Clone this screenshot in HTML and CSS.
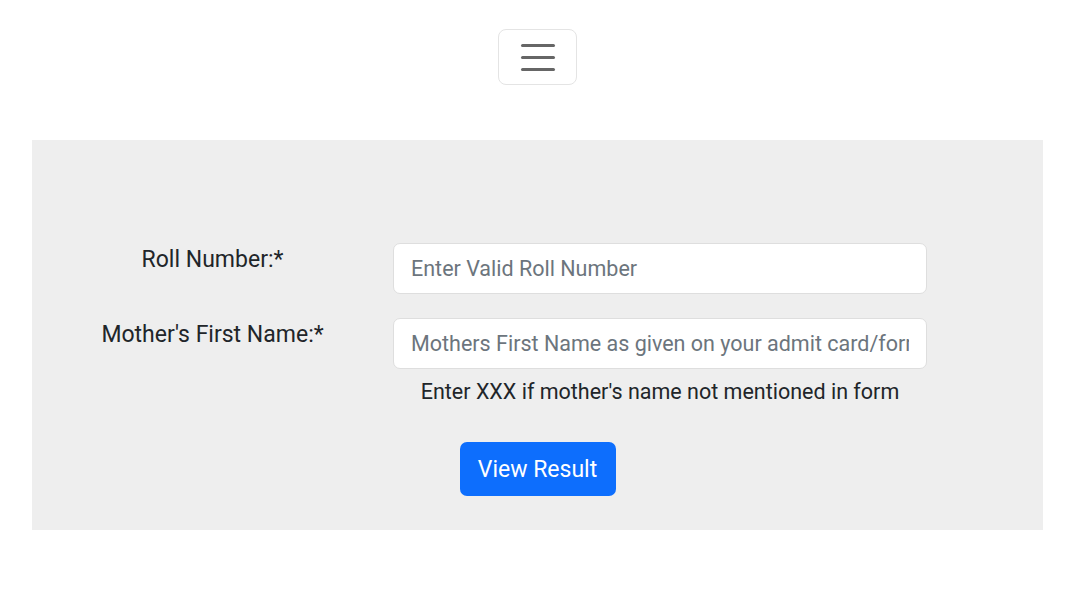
FILE: index.html
```html
<!DOCTYPE html>
<html lang="en">
<head>
<meta charset="utf-8">
<title>Result</title>
<link rel="stylesheet" href="styles.css">
</head>
<body>
<div class="page">
  <header class="topbar">
    <button class="toggler" type="button" aria-label="Toggle navigation">
      <span class="bar"></span><span class="bar"></span><span class="bar"></span>
    </button>
  </header>
  <main class="panel">
    <form class="form">
      <div class="row">
        <label class="label" for="roll">Roll Number:*</label>
        <div class="field">
          <input class="input" id="roll" type="text" placeholder="Enter Valid Roll Number">
        </div>
      </div>
      <div class="row">
        <label class="label" for="mname">Mother's First Name:*</label>
        <div class="field">
          <input class="input" id="mname" type="text" placeholder="Mothers First Name as given on your admit card/form">
          <p class="help">Enter XXX if mother's name not mentioned in form</p>
        </div>
      </div>
      <div class="actions">
        <button class="btn" type="button">View Result</button>
      </div>
    </form>
  </main>
</div>
</body>
</html>
```
FILE: styles.css
```css
* { box-sizing: border-box; }
html, body { margin: 0; padding: 0; background: #fff; }
body {
  font-family: Roboto, "Liberation Sans", Arial, sans-serif;
  color: #212529;
  font-size: 23px;
  line-height: 1.5;
}
.page { width: 1011px; margin-left: 32px; }
.topbar {
  display: flex;
  justify-content: center;
  padding-top: 29px;
  padding-bottom: 55px;
}
.toggler {
  width: 79px;
  height: 56px;
  border: 1px solid #e4e4e4;
  border-radius: 8px;
  background: #fff;
  display: flex;
  flex-direction: column;
  align-items: center;
  justify-content: center;
  gap: 9px;
  padding: 0;
}
.bar {
  display: block;
  width: 34px;
  height: 3px;
  border-radius: 2px;
  background: #666;
}
.panel {
  background: #eeeeee;
  padding: 103px 0 34px;
}
.form { display: flex; flex-direction: column; gap: 24px; }
.row {
  display: grid;
  grid-template-columns: 361px 534px;
}
.label {
  text-align: center;
  line-height: 33px;
}
.field { display: flex; flex-direction: column; }
.input {
  width: 534px;
  height: 51px;
  border: 1px solid #dedede;
  border-radius: 7px;
  background: #fff;
  padding: 0 17px;
  font-family: inherit;
  font-size: 21.5px;
  color: #212529;
  outline: none;
}
.input::placeholder { color: #6c757d; opacity: 1; }
.help {
  margin: 6px 0 0;
  text-align: center;
  font-size: 21.5px;
  line-height: 33px;
}
.actions {
  display: flex;
  justify-content: center;
  margin-top: 10px;
}
.btn {
  width: 156px;
  height: 54px;
  border: none;
  border-radius: 7px;
  background: #0d6efd;
  color: #fff;
  font-family: inherit;
  font-size: 23px;
  padding: 0;
}
```
